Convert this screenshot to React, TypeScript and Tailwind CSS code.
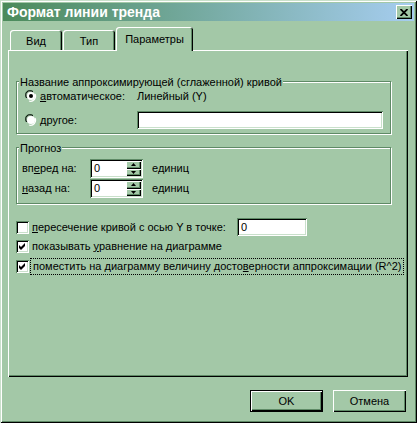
import React from 'react'

const raised =
  'shadow-[inset_1px_1px_0_#ffffff,inset_-1px_-1px_0_#000000,inset_-2px_-2px_0_#5f8a66]'
const sunken =
  'shadow-[inset_1px_1px_0_#5f8a66,inset_-1px_-1px_0_#ffffff,inset_2px_2px_0_#000000,inset_-2px_-2px_0_#c9e0cb]'

function Radio({ checked }: { checked?: boolean }) {
  return (
    <svg width="12" height="12" viewBox="0 0 12 12" className="shrink-0">
      <path d="M1 8 A5 5 0 0 1 8 1" stroke="#5f8a66" strokeWidth="1" fill="none" />
      <path d="M2 8 A4 4 0 0 1 8 2" stroke="#000" strokeWidth="1" fill="none" />
      <circle cx="6" cy="6" r="4" fill="#fff" />
      <path d="M10 4 A5 5 0 0 1 4 11" stroke="#fff" strokeWidth="1.2" fill="none" />
      {checked && <circle cx="6" cy="6" r="2" fill="#000" />}
    </svg>
  )
}

function Check({ checked }: { checked?: boolean }) {
  return (
    <div className={`w-[13px] h-[13px] shrink-0 bg-white ${sunken} flex items-center justify-center`}>
      {checked && (
        <svg width="7" height="7" viewBox="0 0 7 7">
          <path d="M0 2 L2 4 L6 0 L6 3 L2 7 L0 5 Z" fill="#000" />
        </svg>
      )}
    </div>
  )
}

function Spin({ value }: { value: string }) {
  return (
    <div className={`flex h-[19px] w-[53px] bg-white ${sunken} p-[2px]`}>
      <div className="flex-1 pl-[2px] leading-[15px]">{value}</div>
      <div className="flex flex-col w-[15px]">
        <div className={`flex-1 bg-[#a3c8a7] ${raised} flex items-center justify-center`}>
          <svg width="5" height="3" viewBox="0 0 5 3">
            <path d="M2.5 0 L5 3 L0 3 Z" fill="#000" />
          </svg>
        </div>
        <div className={`flex-1 bg-[#a3c8a7] ${raised} flex items-center justify-center`}>
          <svg width="5" height="3" viewBox="0 0 5 3">
            <path d="M0 0 L5 0 L2.5 3 Z" fill="#000" />
          </svg>
        </div>
      </div>
    </div>
  )
}

function Group({ title, className, children }: { title: string; className?: string; children: React.ReactNode }) {
  return (
    <div
      className={`relative ml-[8px] w-[375px] border border-[#5f8a66] shadow-[1px_1px_0_#ffffff,inset_1px_1px_0_#ffffff] ${className ?? ''}`}
    >
      <span className="absolute left-[2px] -top-[6px] px-[1px] leading-[13px] bg-[#a3c8a7]">{title}</span>
      {children}
    </div>
  )
}

export default function App() {
  return (
    <div className="w-[417px] h-[423px] bg-[#a3c8a7] p-[3px] font-['Liberation_Sans',Arial,sans-serif] text-[11px] text-black shadow-[inset_1px_1px_0_#c9e0cb,inset_-1px_-1px_0_#000000,inset_2px_2px_0_#ffffff,inset_-2px_-2px_0_#5f8a66] flex flex-col">
      {/* title bar */}
      <div className="h-[18px] flex items-center justify-between bg-gradient-to-r from-[#4b8a5a] to-[#a6cdf0] pl-[4px] pr-[2px]">
        <span className="text-white font-bold text-[14px] leading-none">Формат линии тренда</span>
        <div className={`w-[16px] h-[14px] bg-[#a3c8a7] ${raised} flex items-center justify-center`}>
          <svg width="8" height="7" viewBox="0 0 8 7">
            <path d="M0.5 0 L7.5 7 M7.5 0 L0.5 7" stroke="#000" strokeWidth="1.8" />
          </svg>
        </div>
      </div>

      {/* tabs */}
      <div className="mt-[6px] flex items-end pl-[7px] h-[23px] relative z-10">
        <div className="w-[52px] h-[20px] rounded-t-[3px] shadow-[inset_1px_1px_0_#ffffff,inset_-1px_0_0_#000000,inset_-2px_0_0_#5f8a66] flex items-center justify-center leading-none pt-[3px]">
          Вид
        </div>
        <div className="ml-[1px] w-[52px] h-[20px] rounded-t-[3px] shadow-[inset_1px_1px_0_#ffffff,inset_-1px_0_0_#000000,inset_-2px_0_0_#5f8a66] flex items-center justify-center leading-none pt-[3px]">
          Тип
        </div>
        <div className="ml-[1px] w-[77px] h-[24px] -mb-[1px] bg-[#a3c8a7] rounded-t-[3px] shadow-[inset_1px_1px_0_#ffffff,inset_-1px_0_0_#000000,inset_-2px_0_0_#5f8a66] flex items-center justify-center leading-none">
          Параметры
        </div>
      </div>

      {/* panel */}
      <div className="ml-[5px] w-[400px] h-[327px] shadow-[inset_1px_1px_0_#ffffff,inset_-1px_-1px_0_#000000,inset_-2px_-2px_0_#5f8a66] flex flex-col">
        <Group title="Название аппроксимирующей (сглаженной) кривой" className="mt-[31px] pb-[4px]">
          <div className="mt-[6px] h-[16px] flex items-center pl-[8px]">
            <Radio checked />
            <span className="ml-[3px] w-[97px]">
              <u>а</u>втоматическое:
            </span>
            <span>Линейный (Y)</span>
          </div>
          <div className="mt-[7px] h-[18px] flex items-center pl-[8px]">
            <Radio />
            <span className="ml-[3px] w-[97px]">
              <u>д</u>ругое:
            </span>
            <div className={`w-[246px] h-[18px] bg-white ${sunken}`} />
          </div>
        </Group>

        <Group title="Прогноз" className="mt-[13px] pb-[5px]">
          <div className="mt-[11px] h-[19px] flex items-center pl-[5px]">
            <span className="w-[68px]">
              вп<u>е</u>ред на:
            </span>
            <Spin value="0" />
            <span className="ml-[9px]">единиц</span>
          </div>
          <div className="mt-[1px] h-[19px] flex items-center pl-[5px]">
            <span className="w-[68px]">
              <u>н</u>азад на:
            </span>
            <Spin value="0" />
            <span className="ml-[9px]">единиц</span>
          </div>
        </Group>

        <div className="mt-[14px] h-[18px] flex items-center pl-[8px]">
          <Check />
          <span className="ml-[3px] w-[205px]">
            <u>п</u>ересечение кривой с осью Y в точке:
          </span>
          <div className={`w-[70px] h-[18px] bg-white ${sunken} pl-[4px] leading-[18px]`}>0</div>
        </div>
        <div className="mt-[1px] h-[18px] flex items-center pl-[8px]">
          <Check checked />
          <span className="ml-[3px]">
            показывать <u>у</u>равнение на диаграмме
          </span>
        </div>
        <div className="mt-[2px] h-[18px] flex items-center pl-[8px]">
          <Check checked />
          <span className="ml-[1px] h-[17px] leading-[15px] px-[2px] border border-dotted border-black">
            поместить на диаграмму величину досто<u>в</u>ерности аппроксимации (R^2)
          </span>
        </div>
      </div>

      {/* buttons */}
      <div className="mt-[13px] flex justify-end pr-[8px] gap-[10px]">
        <div className="w-[73px] h-[22px] border border-black">
          <div className={`w-full h-full ${raised} flex items-center justify-center`}>OK</div>
        </div>
        <div className={`w-[73px] h-[22px] ${raised} flex items-center justify-center`}>Отмена</div>
      </div>
    </div>
  )
}
